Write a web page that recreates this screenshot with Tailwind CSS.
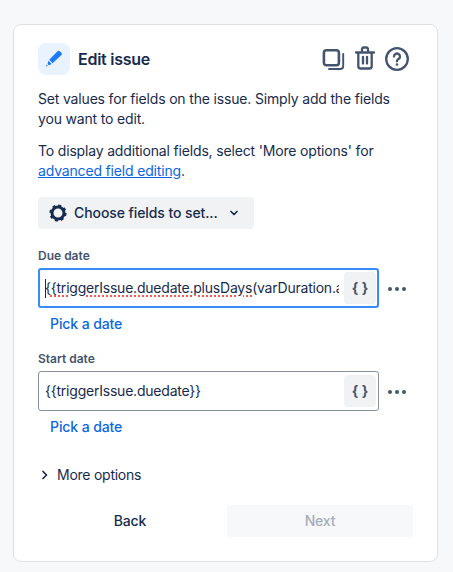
<!DOCTYPE html>
<html>
<head>
<meta charset="utf-8">
<script src="https://cdn.jsdelivr.net/npm/@tailwindcss/browser@4"></script>
</head>
<body class="m-0 bg-[#f7f8f9] font-[Inter,sans-serif] text-[#172b4d]">
<div class="w-[453px] h-[572px] overflow-hidden pt-6 pl-[13px]">
  <div class="w-[425px] h-[538px] bg-white border border-[#dfe1e6] rounded-lg pt-[18px] pl-6 pr-6 flex flex-col text-sm leading-5 tracking-[-0.17px]">
    <div class="flex items-center h-8 shrink-0">
      <div class="w-8 h-8 rounded-lg bg-[#e9f2ff] flex items-center justify-center">
        <svg width="18" height="18" viewBox="0 0 18 18"><path d="M12.6 1.6a1.600 1.600 0 0 1 2.200 0l1.600 1.600a1.600 1.600 0 0 1 0 2.200L7.600 13.600 4.200 10.200Z M3.400 11.200 6.700 14.500 3.900 15.600 2.600 14.300Z M1.600 15l1.400 1.400-1.800.5Z" fill="#1d7afc" transform="translate(0 -0.4)"/></svg>
      </div>
      <div class="ml-2 text-base leading-5 font-semibold tracking-[-0.25px]">Edit issue</div>
      <div class="ml-auto mr-1 flex items-center gap-[9px] text-[#44546f]">
        <svg width="24" height="24" viewBox="0 0 24 24" fill="none" stroke="currentColor" stroke-linecap="round"><rect x="2.900" y="3.200" width="15" height="15" rx="2.500" stroke-width="2.600"/><path d="M22.200 7v12a3 3 0 0 1-3 3H8" stroke-width="1.900"/></svg>
        <svg width="22" height="24" viewBox="0 0 22 24" fill="none" stroke="currentColor" stroke-width="2.300" stroke-linecap="round" stroke-linejoin="round" class="-mt-[3px]"><path d="M2 6.500h18M4.300 6.500V20.200a2.300 2.300 0 0 0 2.300 2.300h8.800a2.300 2.300 0 0 0 2.300-2.300V6.500M8 6V3a1.500 1.500 0 0 1 1.500-1.500h3A1.500 1.500 0 0 1 14 3v3M9 11v6.500M13 11v6.500"/></svg>
        <svg width="24" height="24" viewBox="0 0 24 24" fill="none" stroke="currentColor" stroke-width="2.300" stroke-linecap="round"><circle cx="12" cy="12" r="10.800"/><path d="M9 9.500a3 3 0 1 1 4.500 2.600c-1 .6-1.500 1.100-1.500 2.200"/><circle cx="12" cy="17.500" r="1.300" fill="currentColor" stroke="none"/></svg>
      </div>
    </div>

    <p class="mt-[14px]">Set values for fields on the issue. Simply add the fields you want to edit.</p>
    <p class="mt-3">To display additional fields, select 'More options' for <a class="text-[#0c66e4] underline">advanced field editing</a>.</p>

    <button class="mt-4 w-[216px] h-8 rounded bg-[#f1f2f4] flex items-center pl-[10px] font-medium tracking-[-0.09px]">
      <svg width="20" height="20" viewBox="0 0 20 20" fill="none" class="shrink-0"><circle cx="10" cy="10" r="6" stroke="#172b4d" stroke-width="3"/><circle cx="10" cy="10" r="7.600" stroke="#172b4d" stroke-width="2" stroke-dasharray="3 2.970"/></svg>
      <span class="ml-[6px]">Choose fields to set...</span>
      <svg width="12" height="12" viewBox="0 0 12 12" fill="none" class="ml-[10px]"><path d="M3 4.500 6 7.500 9 4.500" stroke="#172b4d" stroke-width="1.700" stroke-linecap="round" stroke-linejoin="round"/></svg>
    </button>

    <label class="mt-[19px] text-xs leading-4 font-semibold text-[#44546f] tracking-normal">Due date</label>
    <div class="mt-1 flex items-center">
      <div class="relative w-[341px] h-10 rounded-[3px] border-2 border-[#388bff] flex items-center pl-[5px] pr-px">
        <div class="absolute left-[5px] top-[9px] w-px h-[19px] bg-[#172b4d]"></div>
        <div class="flex-1 overflow-hidden whitespace-nowrap tracking-[-0.22px]">
          <span>{</span><span class="underline decoration-dotted decoration-[#f15b50] decoration-2 underline-offset-[2px]">{triggerIssue.duedate.plusDays</span><span>(varDuration.asDays)}}</span>
        </div>
        <div class="ml-[5px] w-8 h-8 shrink-0 rounded bg-[#f1f2f4] flex items-center justify-center font-bold text-[#44546f] tracking-normal">{ }</div>
      </div>
      <div class="ml-[9px] mt-px flex gap-[3px]">
        <i class="w-1 h-1 rounded-full bg-[#44546f]"></i><i class="w-1 h-1 rounded-full bg-[#44546f]"></i><i class="w-1 h-1 rounded-full bg-[#44546f]"></i>
      </div>
    </div>
    <a class="mt-[6px] ml-3 font-medium text-[#0c66e4] tracking-[-0.1px]">Pick a date</a>

    <label class="mt-[17px] text-xs leading-4 font-semibold text-[#44546f] tracking-normal">Start date</label>
    <div class="mt-1 flex items-center">
      <div class="w-[341px] h-10 rounded-[3px] border border-[#8590a2] flex items-center pl-[6px] pr-[2px]">
        <div class="flex-1 overflow-hidden whitespace-nowrap tracking-[-0.22px]">{{triggerIssue.duedate}}</div>
        <div class="ml-[5px] w-8 h-8 shrink-0 rounded bg-[#f1f2f4] flex items-center justify-center font-bold text-[#44546f] tracking-normal">{ }</div>
      </div>
      <div class="ml-[9px] mt-px flex gap-[3px]">
        <i class="w-1 h-1 rounded-full bg-[#44546f]"></i><i class="w-1 h-1 rounded-full bg-[#44546f]"></i><i class="w-1 h-1 rounded-full bg-[#44546f]"></i>
      </div>
    </div>
    <a class="mt-[6px] ml-3 font-medium text-[#0c66e4] tracking-[-0.1px]">Pick a date</a>

    <div class="mt-[28px] flex items-center">
      <svg width="8" height="10" viewBox="0 0 8 10" fill="none" class="ml-[3px]"><path d="M2 1.500 5.500 5 2 8.500" stroke="#172b4d" stroke-width="1.700" stroke-linecap="round" stroke-linejoin="round"/></svg>
      <span class="ml-2 tracking-[-0.25px]">More options</span>
    </div>

    <div class="mt-5 flex w-[375px] gap-[5px]">
      <button class="w-[184px] h-8 rounded font-medium">Back</button>
      <button class="w-[186px] h-8 rounded bg-[#f7f8f9] font-medium text-[#a5adba]">Next</button>
    </div>
  </div>
</div>
</body>
</html>
